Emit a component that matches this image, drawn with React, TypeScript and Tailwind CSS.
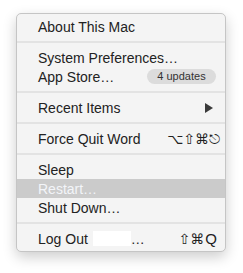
import React from "react";

const font = { fontFamily: '"Liberation Sans", Arial, sans-serif' };
const glyphFont = { fontFamily: '"DejaVu Sans", sans-serif' };

function Separator() {
  return <div className="my-[5px] h-[2px] bg-[#e3e3e3]" />;
}

function Item({
  label,
  right,
  active,
}: {
  label: React.ReactNode;
  right?: React.ReactNode;
  active?: boolean;
}) {
  return (
    <div
      className={`flex h-[19px] items-center justify-between pl-[21px] text-[14px] leading-none ${
        active ? "bg-[#cbcbcb] text-[#f3f5f9]" : "text-[#222222]"
      }`}
    >
      <span>{label}</span>
      {right}
    </div>
  );
}

export default function App() {
  return (
    <div className="h-[273px] w-[243px] bg-white pl-4 pt-[13px]" style={font}>
      <div className="w-[210px] rounded-[5px] border border-[#c5c5c5] bg-[#f4f4f4] py-[3px] shadow-[0_5px_14px_rgba(0,0,0,0.2)]">
        <Item label="About This Mac" />
        <Separator />
        <Item label="System Preferences…" />
        <Item
          label="App Store…"
          right={
            <span className="mr-[9px] flex h-[15px] w-[69px] items-center justify-center rounded-full bg-[#dcdcdc] text-[11px] text-[#333333]">
              4 updates
            </span>
          }
        />
        <Separator />
        <Item
          label="Recent Items"
          right={
            <svg className="mr-[12px]" width="8" height="10" viewBox="0 0 8 10">
              <path d="M0 0 L8 5 L0 10 Z" fill="#3a3a3a" />
            </svg>
          }
        />
        <Separator />
        <Item
          label="Force Quit Word"
          right={
            <span className="mr-[5px] text-[14px] text-[#222222]" style={glyphFont}>
              ⌥⇧⌘⎋
            </span>
          }
        />
        <Separator />
        <Item label="Sleep" />
        <Item label="Restart…" active />
        <Item label="Shut Down…" />
        <Separator />
        <Item
          label={
            <span className="flex items-center">
              Log Out
              <span className="ml-[5px] inline-block h-[15px] w-[38px] bg-white" />
              …
            </span>
          }
          right={
            <span className="mr-[8px] flex items-center text-[14px] text-[#222222]">
              <span style={glyphFont}>⇧⌘</span>
              <span className="ml-[1px] text-[15px]">Q</span>
            </span>
          }
        />
      </div>
    </div>
  );
}
